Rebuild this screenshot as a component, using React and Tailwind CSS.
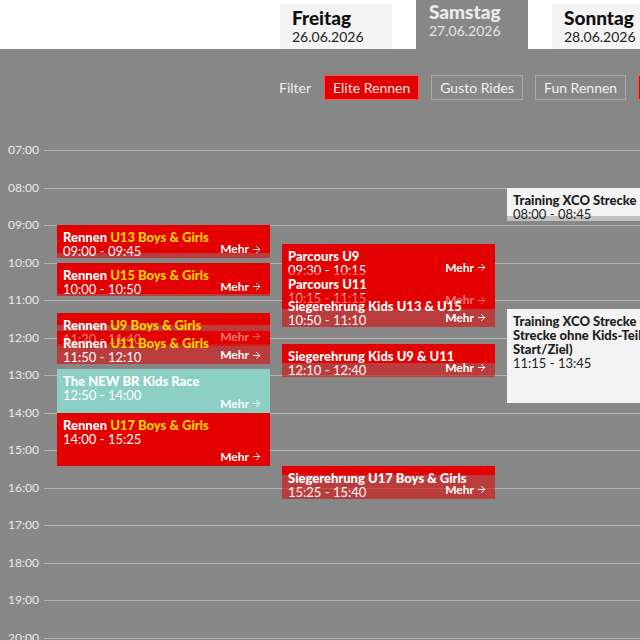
import { ArrowRight } from 'lucide-react';

const HOUR_PX = 37.5;
const START_HOUR = 7;
const COL_LEFT = 57;
const COL_PITCH = 225;
const COL_WIDTH = 213;

const hours = ['07:00', '08:00', '09:00', '10:00', '11:00', '12:00', '13:00', '14:00', '15:00', '16:00', '17:00', '18:00', '19:00', '20:00', '21:00'];

const tone = {
  red: { solid: 'bg-[#e30000]', fill: 'bg-[#e30000]/55', text: 'text-white' },
  teal: { solid: 'bg-[#8dcfc4]', fill: 'bg-[#8dcfc4]/55', text: 'text-white' },
  light: { solid: 'bg-[#f3f3f3]', fill: 'bg-[#f3f3f3]/55', text: 'text-[#1e1e1e]' },
};

const events = [
  { col: 0, from: '09:00', to: '09:45', lead: 'Rennen', title: 'U13 Boys & Girls', tone: 'red' },
  { col: 0, from: '10:00', to: '10:50', lead: 'Rennen', title: 'U15 Boys & Girls', tone: 'red' },
  { col: 0, from: '11:20', to: '11:40', lead: 'Rennen', title: 'U9 Boys & Girls', tone: 'red' },
  { col: 0, from: '11:50', to: '12:10', lead: 'Rennen', title: 'U11 Boys & Girls', tone: 'red' },
  { col: 0, from: '12:50', to: '14:00', lead: 'The NEW BR Kids Race', tone: 'teal' },
  { col: 0, from: '14:00', to: '15:25', lead: 'Rennen', title: 'U17 Boys & Girls', tone: 'red' },
  { col: 1, from: '09:30', to: '10:15', lead: 'Parcours U9', tone: 'red' },
  { col: 1, from: '10:15', to: '11:15', lead: 'Parcours U11', tone: 'red' },
  { col: 1, from: '10:50', to: '11:10', lead: 'Siegerehrung Kids U13 & U15', tone: 'red' },
  { col: 1, from: '12:10', to: '12:40', lead: 'Siegerehrung Kids U9 & U11', tone: 'red' },
  { col: 1, from: '15:25', to: '15:40', lead: 'Siegerehrung U17 Boys & Girls', tone: 'red' },
  { col: 2, from: '08:00', to: '08:45', lead: 'Training XCO Strecke', tone: 'light', noMore: true },
  { col: 2, from: '11:15', to: '13:45', lead: 'Training XCO Strecke (gesamte Strecke ohne Kids-Teil und Start/Ziel)', tone: 'light', noMore: true },
];

const toMin = (t) => {
  const [h, m] = t.split(':').map(Number);
  return (h - START_HOUR) * 60 + m;
};

const place = (ev) => {
  const top = (toMin(ev.from) * HOUR_PX) / 60;
  const height = ((toMin(ev.to) - toMin(ev.from)) * HOUR_PX) / 60;
  return { top, height, left: COL_LEFT + ev.col * COL_PITCH, width: COL_WIDTH };
};

const Tab = ({ day, date, active }) => (
  <div
    className={
      active
        ? 'h-[49px] w-[112px] shrink-0 bg-[#878787] px-[13px] pt-[1px]'
        : 'h-[45px] w-[112px] shrink-0 bg-[#f4f4f4] px-3 pt-[3px]'
    }
  >
    <p className={active ? 'text-[19px] font-black leading-[22px] text-[#ececec]' : 'text-[19px] font-black leading-[22px] text-[#111]'}>{day}</p>
    <p className={active ? 'text-[14px] leading-[16px] text-[#e4e4e4]' : 'text-[14px] leading-[16px] text-[#222]'}>{date}</p>
  </div>
);

const FilterButton = ({ label, on }) => (
  <button
    className={
      on
        ? 'h-[25px] shrink-0 border border-[#ff5050] bg-[#e30000] px-2 text-[14px] text-[#ffe6e6]'
        : 'h-[25px] shrink-0 border border-[#a9a9a9] px-2 text-[14px] text-[#f1f1f1]'
    }
  >
    {label}
  </button>
);

export default function App() {
  return (
    <div className="h-screen w-screen overflow-hidden bg-[#878787] font-['Lato',sans-serif]">
      <header className="flex h-[49px] items-end gap-6 bg-white pl-[280px]">
        <Tab day="Freitag" date="26.06.2026" />
        <Tab day="Samstag" date="27.06.2026" active />
        <Tab day="Sonntag" date="28.06.2026" />
      </header>

      <div className="flex h-[51px] items-end gap-3 pb-0 pl-[279px]">
        <span className="mr-[1px] flex h-[25px] items-center text-[14px] text-[#eeeeee]">Filter</span>
        <FilterButton label="Elite Rennen" on />
        <FilterButton label="Gusto Rides" />
        <FilterButton label="Fun Rennen" />
        <FilterButton label="Kids Rennen" on />
      </div>

      <div className="relative mt-[50px]">
        {hours.map((h) => (
          <div key={h} className="flex h-[37.5px]">
            <span className="-mt-[7px] w-[44px] shrink-0 pl-2 text-[12px] leading-[14px] text-[#ececec]">{h}</span>
            <div className="flex-1 border-t border-[#b4b4b4]" />
          </div>
        ))}

        {/* solid fill covers the booked time span */}
        {events.map((ev, i) => {
          const p = place(ev);
          return (
            <div
              key={`bg-${i}`}
              className={`absolute ${tone[ev.tone].solid}`}
              style={{ top: p.top, left: p.left, width: p.width, height: p.height }}
            />
          );
        })}

        {/* content layer, translucent where it runs past the span */}
        {events.map((ev, i) => {
          const p = place(ev);
          const t = tone[ev.tone];
          return (
            <div
              key={`ev-${i}`}
              className={`absolute ${t.fill} ${t.text} px-[6px] pt-[5px]`}
              style={{ top: p.top, left: p.left, width: p.width, minHeight: p.height }}
            >
              <p className="text-[13px] font-black leading-[14px]">
                {ev.lead}
                {ev.title && <span className="text-[#ffd400]"> {ev.title}</span>}
              </p>
              <p className="text-[13px] leading-[14px]">
                {ev.from} - {ev.to}
              </p>
              {!ev.noMore && (
                <span className="absolute bottom-[2px] right-2 flex items-center gap-[2px] text-[12px] font-bold leading-[14px]">
                  Mehr <ArrowRight size={11} strokeWidth={2} />
                </span>
              )}
            </div>
          );
        })}
      </div>
    </div>
  );
}
